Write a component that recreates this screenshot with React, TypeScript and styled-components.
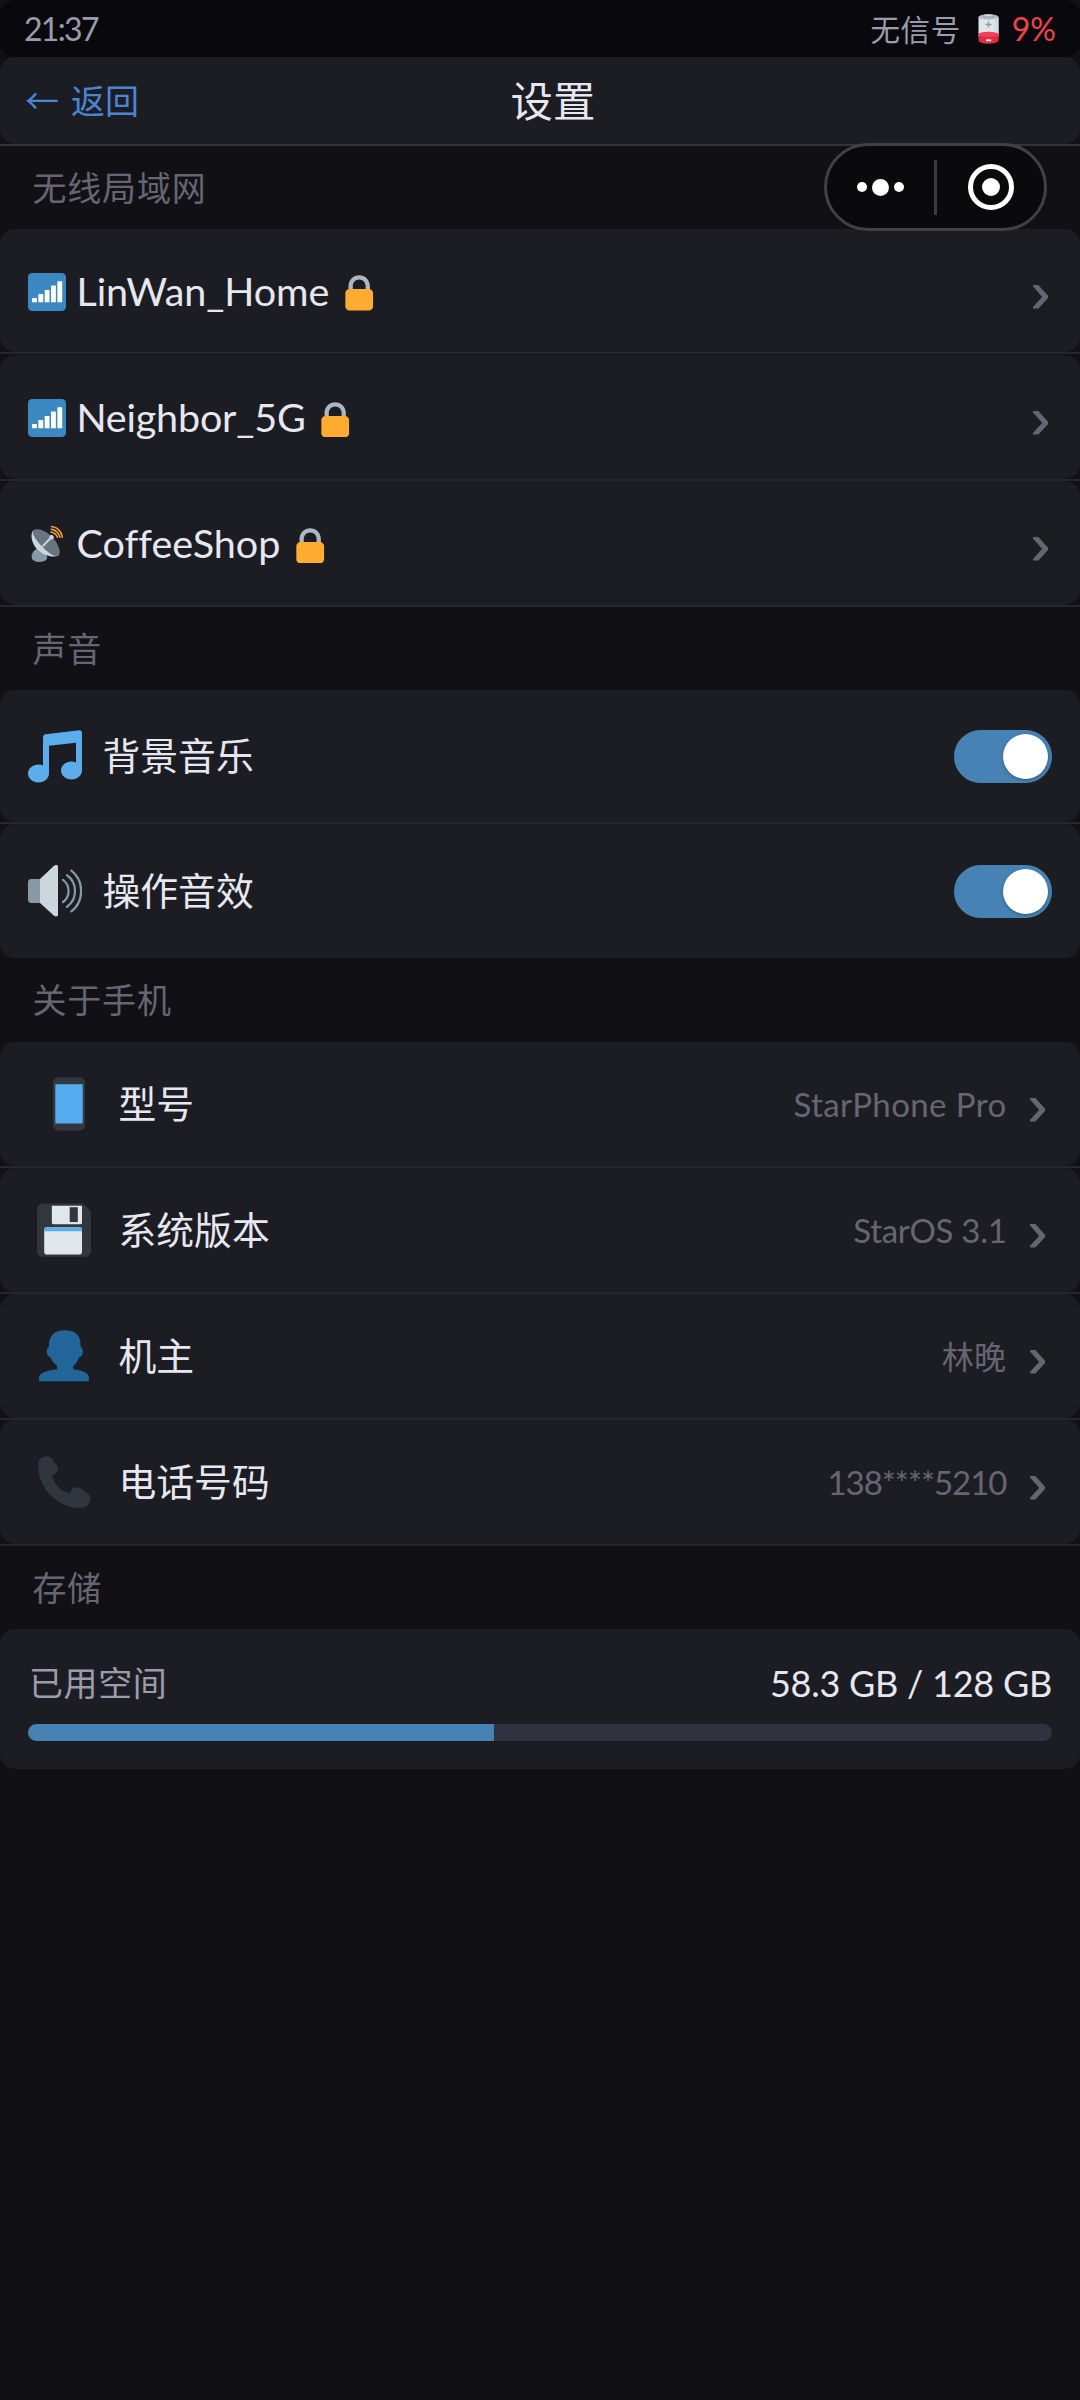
import React from "react";
import styled, { createGlobalStyle } from "styled-components";

const latin = `"Lato", "Noto Sans CJK SC", sans-serif`;
const han = `"Noto Sans CJK SC", sans-serif`;

const c = {
  page: "#111115",
  status: "#09090d",
  surface: "#1c1d22",
  line: "#26272e",
  headerLine: "#33333d",
  text: "#e7e7f2",
  soft: "#9b9bab",
  muted: "#666673",
  link: "#4a85d4",
  danger: "#f0434d",
  accent: "#4682b4",
  track: "#2f3340",
};

const GlobalStyle = createGlobalStyle`
  *, *::before, *::after { box-sizing: border-box; }
  html, body { margin: 0; background: ${c.page}; }
`;

const Screen = styled.main`
  position: relative;
  display: flex;
  flex-direction: column;
  width: 1080px;
  height: 2400px;
  overflow: hidden;
  background: ${c.page};
  color: ${c.text};
  font-family: ${latin};
  font-variant-ligatures: none;
`;

const StatusBar = styled.div`
  display: flex;
  align-items: center;
  justify-content: space-between;
  height: 57px;
  padding: 0 24px;
  border-radius: 15px;
  background: ${c.status};
`;

const Clock = styled.span`
  font-size: 32px;
  line-height: 40px;
  letter-spacing: -1.7px;
  color: ${c.soft};
`;

const StatusInfo = styled.div`
  display: flex;
  align-items: center;
`;

const Signal = styled.span`
  padding-bottom: 2px;
  font-family: ${han};
  font-size: 29.5px;
  line-height: 40px;
  letter-spacing: 0.6px;
  color: ${c.soft};
`;

const BatteryLevel = styled.span`
  font-size: 32px;
  line-height: 40px;
  color: ${c.danger};
`;

const Header = styled.header`
  border-bottom: 2px solid ${c.headerLine};
`;

const HeaderInner = styled.div`
  display: flex;
  align-items: center;
  height: 87px;
  padding: 0 113px 0 25px;
  border-radius: 15px;
  background: ${c.surface};
`;

const BackButton = styled.button`
  display: flex;
  align-items: center;
  gap: 12px;
  padding: 0 0 1px;
  border: 0;
  background: none;
  font-family: ${han};
  font-size: 34px;
  line-height: 48px;
  color: ${c.link};
`;

const Title = styled.h1`
  flex: 1;
  margin: 0;
  padding-bottom: 4px;
  font-family: ${han};
  font-size: 42.4px;
  font-weight: 400;
  line-height: 60px;
  text-align: center;
`;

const SectionTitle = styled.h2<{ $h?: number }>`
  display: flex;
  align-items: center;
  height: ${(p) => p.$h ?? 83}px;
  margin: 0;
  padding: 0 32.5px 3px;
  font-family: ${han};
  font-size: 34px;
  font-weight: 400;
  letter-spacing: 0.8px;
  color: ${c.muted};
`;

const RowFrame = styled.div<{ $gap?: number; $last?: boolean }>`
  margin-bottom: ${(p) => p.$gap ?? 0}px;
  border-bottom: ${(p) => (p.$last ? "0" : `2px solid ${c.line}`)};
`;

const RowInner = styled.div<{ $h: number; $l: number; $r: number }>`
  display: flex;
  align-items: center;
  height: ${(p) => p.$h}px;
  padding: 0 ${(p) => p.$r}px 0 ${(p) => p.$l}px;
  border-radius: 15px;
  background: ${c.surface};
`;

const NetworkName = styled.span<{ $track: number }>`
  margin: 0 10.5px 0 10.5px;
  font-size: 39.5px;
  line-height: 48px;
  letter-spacing: ${(p) => p.$track}px;
`;

const Label = styled.span<{ $gap: number }>`
  margin-left: ${(p) => p.$gap}px;
  padding-bottom: 4px;
  font-family: ${han};
  font-size: 37.8px;
  line-height: 54px;
`;

const Value = styled.span<{ $track?: number; $han?: boolean }>`
  margin-left: auto;
  padding-bottom: ${(p) => (p.$han ? 3 : 0)}px;
  font-family: ${(p) => (p.$han ? han : latin)};
  font-size: ${(p) => (p.$han ? 32 : 33)}px;
  line-height: 48px;
  letter-spacing: ${(p) => p.$track ?? 0}px;
  color: ${c.muted};
`;

const Chevron = styled.span<{ $push?: boolean }>`
  margin-left: ${(p) => (p.$push ? "auto" : "21.5px")};
  padding-top: 2px;
  font-family: "Liberation Sans", sans-serif;
  font-size: 57px;
  line-height: 64px;
  -webkit-text-stroke: 1px ${c.muted};
  color: ${c.muted};
`;

const Toggle = styled.button`
  display: flex;
  align-items: center;
  justify-content: flex-end;
  width: 98px;
  height: 53px;
  margin: 1px 0 0 auto;
  padding: 0 4.5px;
  border: 0;
  border-radius: 27px;
  background: ${c.accent};
`;

const Knob = styled.span`
  width: 45px;
  height: 45px;
  border-radius: 50%;
  background: #fff;
  box-shadow: 0 1px 3px rgba(0, 0, 0, 0.35);
`;

const StorageCard = styled.section`
  height: 140px;
  padding: 30px 28px 0;
  border-radius: 15px;
  background: ${c.surface};
`;

const StorageHead = styled.div`
  display: flex;
  align-items: center;
  justify-content: space-between;
  height: 48px;
`;

const StorageLabel = styled.span`
  padding: 0 0 3px 1px;
  font-family: ${han};
  font-size: 34px;
  line-height: 48px;
  letter-spacing: 0.6px;
  color: ${c.soft};
`;

const StorageValue = styled.span`
  font-size: 36px;
  line-height: 48px;
  letter-spacing: -0.25px;
`;

const StorageTrack = styled.div`
  height: 17px;
  margin-top: 17px;
  overflow: hidden;
  border-radius: 8.5px;
  background: ${c.track};
`;

const StorageFill = styled.div`
  height: 100%;
  background: ${c.accent};
`;

const Capsule = styled.div`
  position: absolute;
  top: 143px;
  left: 824px;
  display: flex;
  align-items: center;
  width: 223px;
  height: 88px;
  border: 3px solid #424245;
  border-radius: 44px;
  background: #0a0a0c;
`;

const CapsuleHalf = styled.div`
  display: flex;
  flex: 1;
  align-items: center;
  justify-content: center;
  gap: 5px;
`;

const CapsuleDivider = styled.div`
  width: 3px;
  height: 55px;
  background: #3c3c3e;
`;

const Dot = styled.span<{ $size: number }>`
  width: ${(p) => p.$size}px;
  height: ${(p) => p.$size}px;
  border-radius: 50%;
  background: #fff;
`;

const Ring = styled.span`
  display: flex;
  align-items: center;
  justify-content: center;
  width: 46px;
  height: 46px;
  border: 5px solid #fff;
  border-radius: 50%;
`;

const BatteryArt = styled.svg`
  width: 21px;
  height: 30px;
  margin: 0 13px 0 17px;
`;

const Art = styled.svg<{ $size: number; $dy?: number }>`
  flex: none;
  width: ${(p) => p.$size}px;
  height: ${(p) => p.$size}px;
  margin-top: ${(p) => p.$dy ?? 0}px;
`;

const BatteryIcon = () => (
  <BatteryArt viewBox="0 0 21 30">
    <path fill="#dfe6ea" d="M0.5 3v20h20V3z" />
    <path fill="#d3dce1" d="M16.5 4h4v16h-4z" />
    <ellipse cx="10.5" cy="3" rx="10" ry="2.8" fill="#b4c0c8" />
    <ellipse cx="10.5" cy="2" rx="5.5" ry="1.5" fill="#8899a6" />
    <ellipse cx="10.5" cy="1.4" rx="4.6" ry="1.2" fill="#ccd6dd" />
    <path d="M10.5 7.5v6M7.5 10.5h6" stroke="#8899a6" strokeWidth="1.4" />
    <path fill="#dd2e44" d="M0.5 20v6.5c0 1.8 4.5 3.2 10 3.2s10-1.4 10-3.2V20z" />
    <ellipse cx="10.5" cy="20.3" rx="10" ry="2.6" fill="#f4405a" />
    <rect x="8" y="25.4" width="5.2" height="1.8" fill="#fff" />
  </BatteryArt>
);

const SignalIcon = () => (
  <Art $size={38} $dy={2} viewBox="0 0 36 36">
    <rect width="36" height="36" rx="4" fill="#3b88c3" />
    <g fill="#fff">
      <rect x="3.8" y="23.8" width="4.6" height="4" rx=".5" />
      <rect x="9.8" y="20" width="4.6" height="7.8" rx=".5" />
      <rect x="15.8" y="16" width="4.6" height="11.8" rx=".5" />
      <rect x="21.8" y="11.8" width="4.6" height="16" rx=".5" />
      <rect x="27.8" y="7.7" width="4.6" height="20.1" rx=".5" />
    </g>
  </Art>
);

const SatelliteIcon = () => (
  <Art $size={38} $dy={2} viewBox="0 0 36 36">
    <path
      fill="#8899a6"
      d="M8.2 22.6C5 24.5 3.1 27.7 3.5 31c.3 2.5 3.6 4 7.4 4s7.2-1.4 7.2-4.2l-.4-3z"
    />
    <path
      fill="#ccd6dd"
      d="M5 5C2.300 7.700 2.600 16.100 8 22.200c5.600 6.400 16.500 9.500 21.200 6.400z"
    />
    <path
      fill="#66757f"
      d="M5 5c2.600-2.500 11-.7 17.300 5.600s9.600 15.300 6.900 18c-2.600 2.500-8.900-1.300-14.800-7.100S2.500 7.500 5 5z"
    />
    <path d="M14.200 19.800l8-8.200" stroke="#ccd6dd" strokeWidth="1.900" strokeLinecap="round" />
    <circle cx="22.300" cy="11.500" r="2.100" fill="#ccd6dd" />
    <g fill="none" stroke="#f4a03a" strokeWidth="1.400" strokeLinecap="round">
      <path d="M21.700 6.700c3.200.6 5.200 2.300 6.300 5" />
      <path d="M22 4c4.200.7 7.200 3.300 8.200 7.700" />
      <path d="M22.200 1.400c6 .8 9.600 4.600 10.300 10.300" />
    </g>
  </Art>
);

const LockIcon = () => (
  <Art $size={38.4} $dy={2} viewBox="0 0 36 36">
    <path
      fill="#aab8c2"
      d="M18 3C12.477 3 8 7.477 8 13v10h4V13c0-3.313 2.686-6 6-6s6 2.687 6 6v10h4V13c0-5.523-4.477-10-10-10z"
    />
    <path
      fill="#ffac33"
      d="M31 32c0 2.209-1.791 4-4 4H9c-2.209 0-4-1.791-4-4V20c0-2.209 1.791-4 4-4h18c2.209 0 4 1.791 4 4v12z"
    />
  </Art>
);

const MusicIcon = () => (
  <Art $size={54} $dy={1} viewBox="0 0 36 36">
    <path
      fill="#5dadec"
      d="M34.209.206L11.791 2.793C10.806 2.907 10 3.811 10 4.803v18.782C9.09 23.214 8.075 23 7 23c-3.865 0-7 2.685-7 6 0 3.314 3.135 6 7 6s7-2.686 7-6V10.539l18-2.077v13.124c-.91-.372-1.925-.586-3-.586-3.865 0-7 2.685-7 6 0 3.314 3.135 6 7 6s7-2.686 7-6V1.803c0-.992-.806-1.71-1.791-1.597z"
    />
  </Art>
);

const SpeakerIcon = () => (
  <Art $size={54} viewBox="0 0 36 36">
    <path fill="#8899a6" d="M9 10H2c-1.100 0-2 .9-2 2v12c0 1.100.9 2 2 2h7z" />
    <path
      fill="#ccd6dd"
      d="M8 10L17 1.500c.6-.5 1.200-.8 1.900-.8.7 0 1.100.4 1.100 1.100v32.100c0 .7-.4 1.100-1.100 1.100-.7 0-1.300-.3-1.900-.8L8 26z"
    />
    <g fill="none" stroke="#8899a6" strokeWidth="1.500" strokeLinecap="round">
      <path d="M23.300 10.600c5 3.600 5 11.200 0 14.800" />
      <path d="M26 7.500c7.100 5 7.100 16 0 21" />
      <path d="M28.900 4.400c8.700 6.700 8.700 20.500 0 27.200" />
    </g>
  </Art>
);

const PhoneIcon = () => (
  <Art $size={54} viewBox="0 0 36 36">
    <rect x="10.700" y=".2" width="21.300" height="35.400" rx="3.400" fill="#31373d" />
    <rect x="12.200" y="4.800" width="18.300" height="26.200" fill="#55acee" />
  </Art>
);

const FloppyIcon = () => (
  <Art $size={54} viewBox="0 0 36 36">
    <path
      fill="#31373d"
      d="M4 .3h25.800c.7 0 1.200.2 1.700.7l3.800 3.800c.5.5.7 1 .7 1.700v25.300c0 2.200-1.800 4-4 4H4c-2.200 0-4-1.800-4-4V4.300c0-2.200 1.800-4 4-4z"
    />
    <path fill="#e1e8ed" d="M9.900 1.800H30v11.400c0 .5-.4.900-.9.900H10.800c-.5 0-.9-.4-.9-.9z" />
    <rect x="21.800" y="2.800" width="5.400" height="9.900" fill="#31373d" />
    <path
      fill="#e1e8ed"
      d="M6.300 16.200h22.200c.9 0 1.500.7 1.500 1.500v15.200c0 .8-.6 1.500-1.500 1.500H6.300c-.9 0-1.500-.7-1.500-1.500V17.700c0-.8.6-1.500 1.500-1.500z"
    />
    <path fill="#5dadec" d="M6.300 16.200h22.200c.9 0 1.500.7 1.500 1.500v1.100H4.800v-1.100c0-.8.6-1.500 1.500-1.500z" />
  </Art>
);

const PersonIcon = () => (
  <Art $size={54} viewBox="0 0 36 36">
    <path
      fill="#269"
      d="M24.200 26.800v-2.200c1.800-1.400 3.100-3.400 3.900-5.800 1.500-.3 2.500-1.900 2.500-4 0-1.300-.6-2.400-1.500-3C29.400 4.700 26 .9 18.600.9S7.800 4.700 8 11.800c-.9.600-1.500 1.700-1.500 3 0 2.100 1 3.700 2.500 4 .8 2.400 2.600 4.400 4.400 5.800v2.200C6 27.600 1.300 29.500 1.300 32.700v1.200c0 .6.400 1 1 1h31.400c.6 0 1-.4 1-1v-1.200c0-3.200-3.700-5.100-10.500-5.900z"
    />
  </Art>
);

const ReceiverIcon = () => (
  <Art $size={54} viewBox="0 0 36 36">
    <path
      fill="#31353d"
      d="M.7 7C.6 3.300 2.800.8 6 .8c1.900 0 3.200.6 4.300 2l2.900 4c1.200 1.800 1.200 4.200-.5 5.600-.8.7-1.700 1-2.700 1.100.7 3.300 2.300 6.100 4.700 8.400 2.300 2.200 4.600 3.300 7.300 3.600.1-.9.600-1.800 1.400-2.600 1.600-1.600 4-1.900 5.800-.6l4.500 3.400c1.500 1.100 1.900 2.300 1.800 3.700-.2 3.800-3.200 6-7.300 6-6.800 0-13.800-3.100-19.100-8.500C3.500 21.300.8 13.700.7 7z"
    />
  </Art>
);

const networks = [
  { name: "LinWan_Home", Icon: SignalIcon, h: 123, gap: 1, track: -0.1 },
  { name: "Neighbor_5G", Icon: SignalIcon, h: 124, gap: 0, track: -0.2 },
  { name: "CoffeeShop", Icon: SatelliteIcon, h: 124, gap: 0, track: 0 },
];

const sounds = [
  { label: "背景音乐", Icon: MusicIcon, h: 132 },
  { label: "操作音效", Icon: SpeakerIcon, h: 134 },
];

const about = [
  { label: "型号", value: "StarPhone Pro", Icon: PhoneIcon, track: 0.4 },
  { label: "系统版本", value: "StarOS 3.1", Icon: FloppyIcon, track: -0.3 },
  { label: "机主", value: "林晚", Icon: PersonIcon, track: 0.4, han: true },
  { label: "电话号码", value: "138****5210", Icon: ReceiverIcon, track: -1 },
];

const storage = { used: 58.3, total: 128 };

export default function App() {
  return (
    <Screen>
      <GlobalStyle />
      <StatusBar>
        <Clock>21:37</Clock>
        <StatusInfo>
          <Signal>无信号</Signal>
          <BatteryIcon />
          <BatteryLevel>9%</BatteryLevel>
        </StatusInfo>
      </StatusBar>
      <Header>
        <HeaderInner>
          <BackButton>
            <span>←</span>
            <span>返回</span>
          </BackButton>
          <Title>设置</Title>
        </HeaderInner>
      </Header>

      <SectionTitle>无线局域网</SectionTitle>
      {networks.map(({ name, Icon, h, gap, track }) => (
        <RowFrame key={name} $gap={gap}>
          <RowInner $h={h} $l={28} $r={30}>
            <Icon />
            <NetworkName $track={track}>{name}</NetworkName>
            <LockIcon />
            <Chevron $push>›</Chevron>
          </RowInner>
        </RowFrame>
      ))}

      <SectionTitle>声音</SectionTitle>
      {sounds.map(({ label, Icon, h }, i) => (
        <RowFrame key={label} $last={i === sounds.length - 1}>
          <RowInner $h={h} $l={28} $r={28}>
            <Icon />
            <Label $gap={20.5}>{label}</Label>
            <Toggle aria-label={label}>
              <Knob />
            </Toggle>
          </RowInner>
        </RowFrame>
      ))}

      <SectionTitle $h={84}>关于手机</SectionTitle>
      {about.map(({ label, value, Icon, track, han: isHan }) => (
        <RowFrame key={label}>
          <RowInner $h={124} $l={37} $r={33}>
            <Icon />
            <Label $gap={27.5}>{label}</Label>
            <Value $track={track} $han={isHan}>
              {value}
            </Value>
            <Chevron>›</Chevron>
          </RowInner>
        </RowFrame>
      ))}

      <SectionTitle>存储</SectionTitle>
      <StorageCard>
        <StorageHead>
          <StorageLabel>已用空间</StorageLabel>
          <StorageValue>
            {storage.used} GB / {storage.total} GB
          </StorageValue>
        </StorageHead>
        <StorageTrack>
          <StorageFill style={{ width: `${(storage.used / storage.total) * 100}%` }} />
        </StorageTrack>
      </StorageCard>

      <Capsule>
        <CapsuleHalf>
          <Dot $size={10} />
          <Dot $size={17} />
          <Dot $size={10} />
        </CapsuleHalf>
        <CapsuleDivider />
        <CapsuleHalf>
          <Ring>
            <Dot $size={18} />
          </Ring>
        </CapsuleHalf>
      </Capsule>
    </Screen>
  );
}
